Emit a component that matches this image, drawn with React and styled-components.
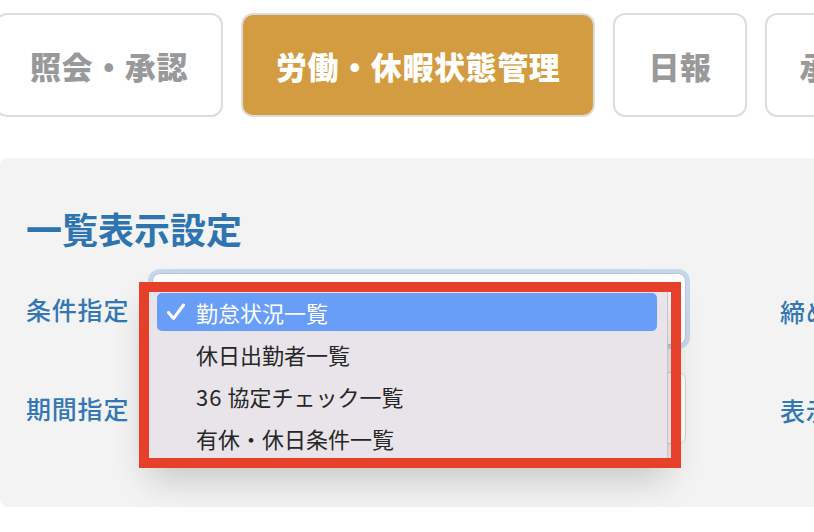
import React from 'react';
import styled, { createGlobalStyle } from 'styled-components';

const GlobalStyle = createGlobalStyle`
  html, body {
    margin: 0;
    padding: 0;
    background: #ffffff;
    overflow: hidden;
  }
  body {
    width: 814px;
    height: 532px;
    font-family: "Noto Sans CJK JP", "Noto Sans", sans-serif;
  }
`;

const Page = styled.div`
  width: 814px;
  height: 532px;
  overflow: hidden;
`;

const TabBar = styled.nav`
  display: flex;
  gap: 18px;
  padding-top: 13px;
  margin-left: -5px;
  white-space: nowrap;
`;

const Tab = styled.div`
  flex: none;
  display: flex;
  align-items: center;
  justify-content: center;
  box-sizing: border-box;
  height: 104px;
  padding: 0 33px 0 33px;
  border: 2px solid #dddddd;
  border-radius: 12px;
  background: ${(p) => (p.$active ? '#d49c40' : '#ffffff')};
  color: ${(p) => (p.$active ? '#ffffff' : '#999999')};
  font-size: 31px;
  font-weight: 900;
  letter-spacing: 0.6px;
`;

const Panel = styled.section`
  margin-top: 41px;
  height: 349px;
  box-sizing: border-box;
  padding: 52px 0 0 26px;
  background: #f3f3f3;
  border-radius: 8px 0 0 8px;
`;

const Heading = styled.h2`
  margin: 0;
  font-size: 36px;
  line-height: 36px;
  font-weight: 700;
  color: #2e74b1;
`;

const Form = styled.div`
  display: grid;
  grid-template-columns: 126px 534px 1fr;
  grid-auto-rows: 72px;
  row-gap: 27px;
  align-items: center;
  margin-top: 27px;
  white-space: nowrap;
`;

const Label = styled.div`
  font-size: 25px;
  font-weight: 500;
  letter-spacing: 0.8px;
  color: #3477b4;
  padding-left: ${(p) => (p.$side ? '94px' : '0')};
  padding-top: ${(p) => (p.$side ? '4px' : '0')};
`;

const FieldWrap = styled.div`
  position: relative;
  height: 72px;
`;

const Field = styled.div`
  box-sizing: border-box;
  height: 100%;
  background: #ffffff;
  border: 1px solid ${(p) => (p.$focus ? '#b9c6d6' : '#d6d6d6')};
  border-radius: 8px;
  box-shadow: ${(p) => (p.$focus ? '0 0 0 4px #c6d8ec' : 'none')};
`;

const Popup = styled.ul`
  position: absolute;
  left: -4px;
  top: 15px;
  width: 520px;
  box-sizing: border-box;
  margin: 0;
  padding: 4px 10px 4px 8px;
  list-style: none;
  background: #e8e4e9;
  border: 1px solid #c8c4c8;
  border-radius: 6px;
  box-shadow: 0 16px 36px rgba(0, 0, 0, 0.2), 0 2px 6px rgba(0, 0, 0, 0.08);
  z-index: 2;
`;

const Option = styled.li`
  display: flex;
  align-items: center;
  height: 38px;
  margin-bottom: 4px;
  padding-left: 9px;
  border-radius: 5px;
  background: ${(p) => (p.$selected ? '#689ef8' : 'transparent')};
  color: ${(p) => (p.$selected ? '#ffffff' : '#262626')};
  font-size: 22px;

  &:last-child {
    margin-bottom: 0;
  }
`;

const Num = styled.span`
  letter-spacing: 1px;
  margin-right: 5px;
`;

const Check = styled.span`
  display: inline-flex;
  width: 30px;
  flex: none;
`;

const Highlight = styled.div`
  position: absolute;
  left: -13px;
  top: 9px;
  width: 542px;
  height: 186px;
  box-sizing: border-box;
  border: 10px solid #e6402a;
  z-index: 3;
  pointer-events: none;
`;

const options = [
  '勤怠状況一覧',
  '休日出勤者一覧',
  <>
    <Num>36</Num>協定チェック一覧
  </>,
  '有休・休日条件一覧',
];

const CheckIcon = () => (
  <svg width="20" height="20" viewBox="0 0 20 20">
    <path d="M2.5 10.5 L7.5 16.5 L17.5 3" fill="none" stroke="#ffffff" strokeWidth="3" strokeLinecap="round" strokeLinejoin="round" />
  </svg>
);

export default function App() {
  return (
    <Page>
      <GlobalStyle />
      <TabBar>
        <Tab>照会・承認</Tab>
        <Tab $active>労働・休暇状態管理</Tab>
        <Tab>日報</Tab>
        <Tab>承認申請</Tab>
      </TabBar>
      <Panel>
        <Heading>一覧表示設定</Heading>
        <Form>
          <Label>条件指定</Label>
          <FieldWrap>
            <Field $focus />
            <Popup>
              {options.map((o, i) => (
                <Option key={i} $selected={i === 0}>
                  <Check>{i === 0 && <CheckIcon />}</Check>
                  {o}
                </Option>
              ))}
            </Popup>
            <Highlight />
          </FieldWrap>
          <Label $side>締め日指定</Label>

          <Label>期間指定</Label>
          <FieldWrap>
            <Field />
          </FieldWrap>
          <Label $side>表示形式</Label>
        </Form>
      </Panel>
    </Page>
  );
}
